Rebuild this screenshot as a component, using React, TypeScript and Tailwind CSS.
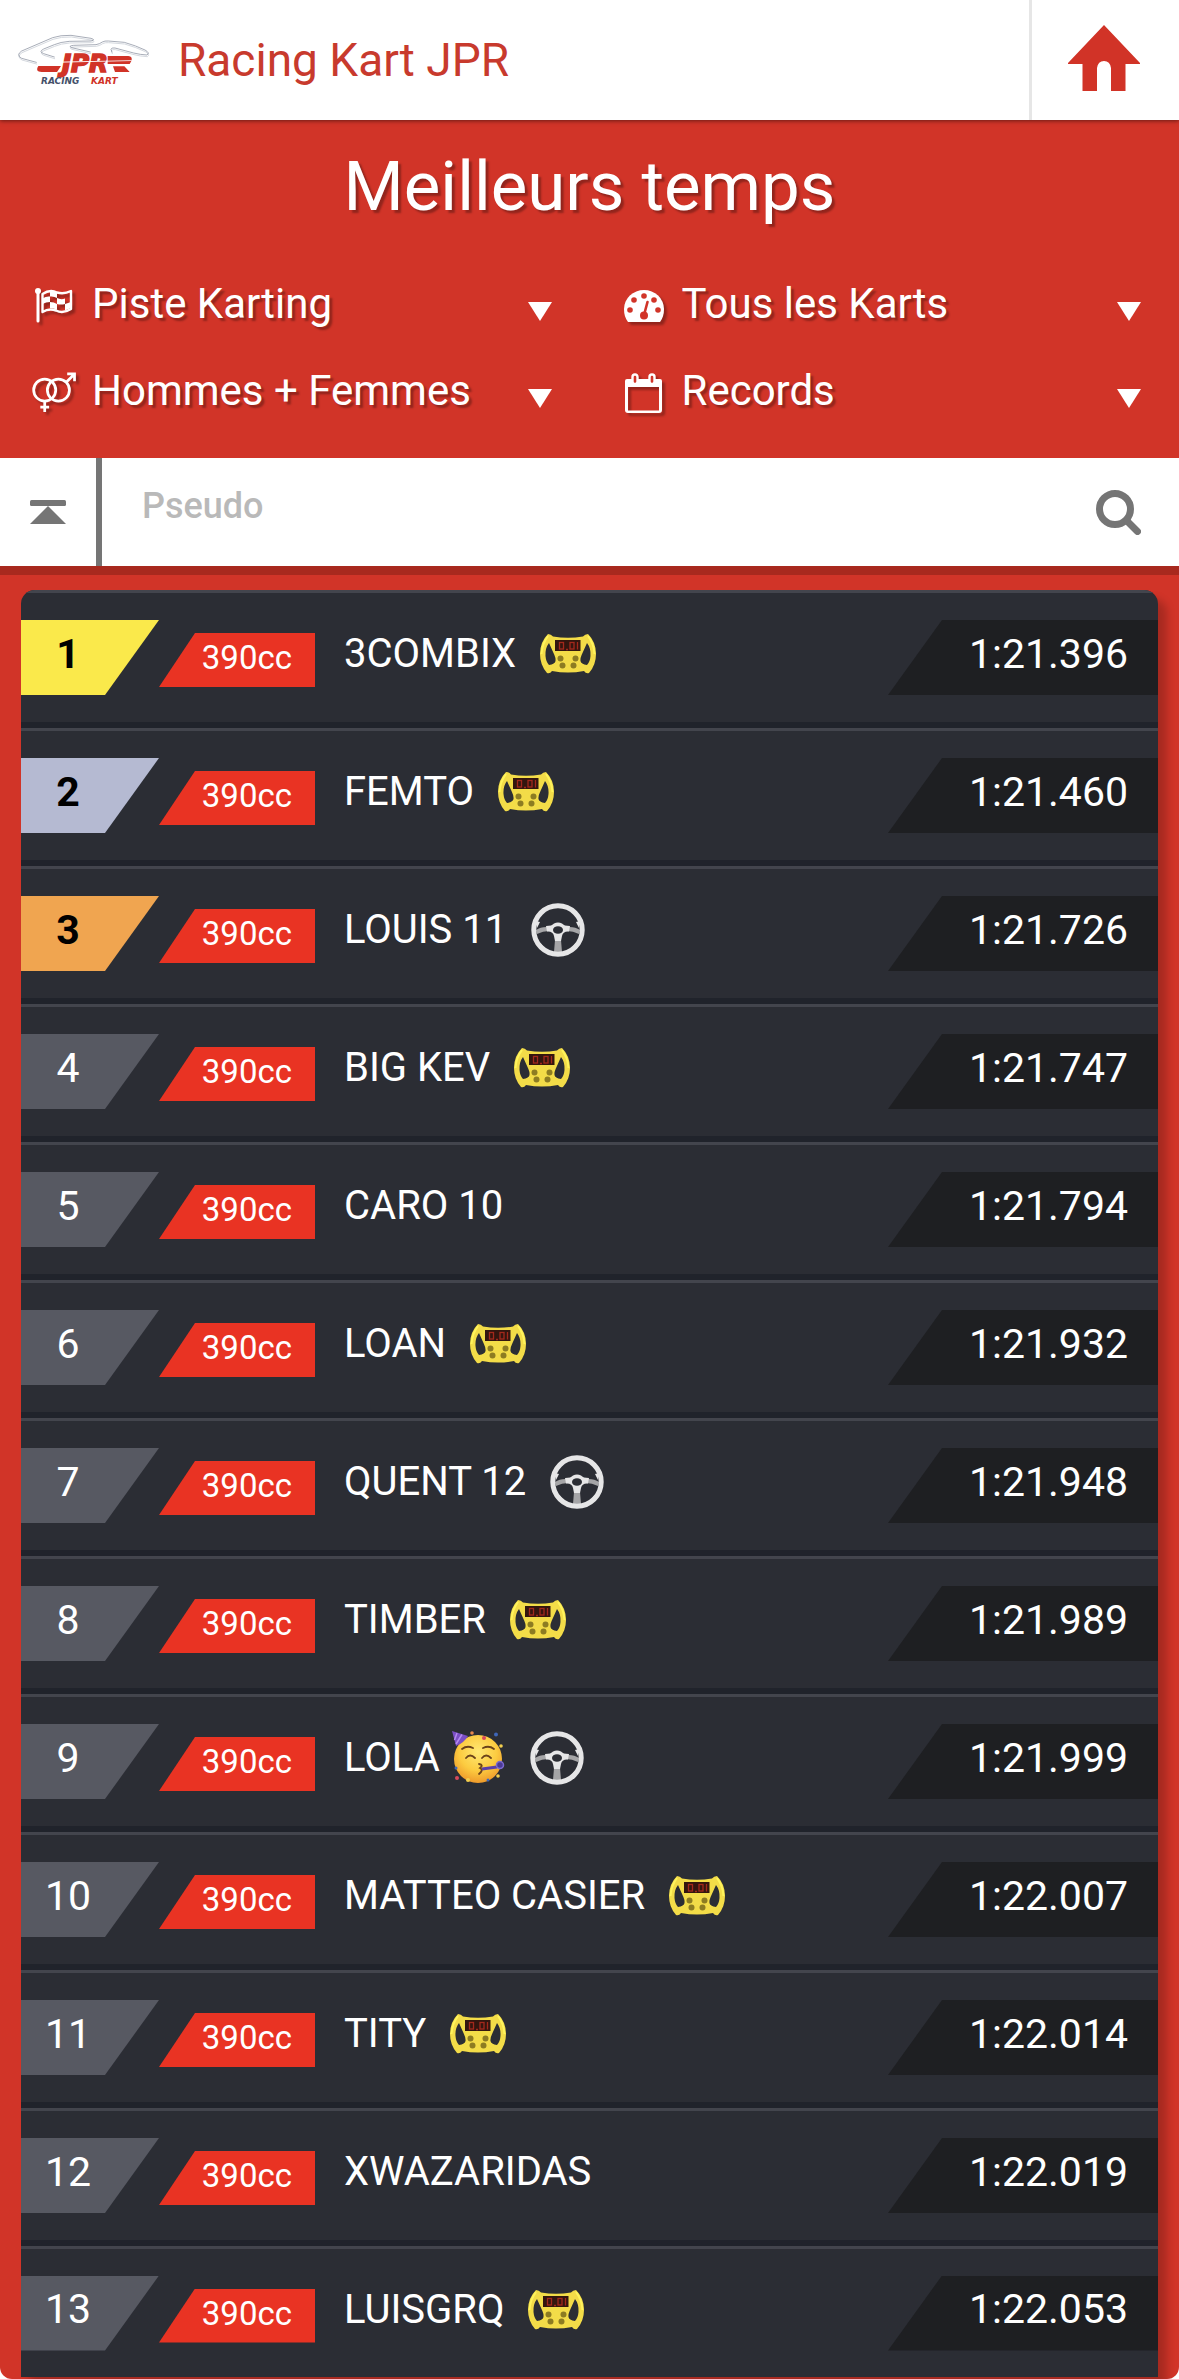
import React from "react";

interface Lap {
  rank: number;
  name: string;
  time: string;
  wheel?: "f1" | "classic";
  party?: boolean;
}

const laps: Lap[] = [
  { rank: 1, name: "3COMBIX", time: "1:21.396", wheel: "f1" },
  { rank: 2, name: "FEMTO", time: "1:21.460", wheel: "f1" },
  { rank: 3, name: "LOUIS 11", time: "1:21.726", wheel: "classic" },
  { rank: 4, name: "BIG KEV", time: "1:21.747", wheel: "f1" },
  { rank: 5, name: "CARO 10", time: "1:21.794" },
  { rank: 6, name: "LOAN", time: "1:21.932", wheel: "f1" },
  { rank: 7, name: "QUENT 12", time: "1:21.948", wheel: "classic" },
  { rank: 8, name: "TIMBER", time: "1:21.989", wheel: "f1" },
  { rank: 9, name: "LOLA", time: "1:21.999", wheel: "classic", party: true },
  { rank: 10, name: "MATTEO CASIER", time: "1:22.007", wheel: "f1" },
  { rank: 11, name: "TITY", time: "1:22.014", wheel: "f1" },
  { rank: 12, name: "XWAZARIDAS", time: "1:22.019" },
  { rank: 13, name: "LUISGRQ", time: "1:22.053", wheel: "f1" },
];

const rankColors: Record<number, string> = {
  1: "bg-[#fae94b] text-black font-bold",
  2: "bg-[#b5bad2] text-black font-bold",
  3: "bg-[#f0a550] text-black font-bold",
};

const trackLeft =
  "M76 110 L32 98 Q14 88 32 76 L125 36 Q148 28 180 29 L240 38 Q256 43 240 46 L175 47 Q148 49 130 57 L98 70 Q82 78 98 84 L130 94";
const trackRight =
  "M238 79 L182 66 Q170 61 188 59 L255 57 Q266 55 274 49 Q281 45 292 46 L340 50 Q375 60 402 73 Q418 82 408 88 Q388 87 368 82 L312 67 Q301 65 300 71 L303 79";

const Logo = () => (
  <svg viewBox="15 25 402 156" className="w-[134px] shrink-0" role="img" aria-label="JPR Racing Kart">
    <g fill="none" strokeLinecap="round" strokeLinejoin="round">
      <g stroke="#d5d9df" strokeWidth="3" transform="translate(1 5)">
        <path d={trackLeft} />
        <path d={trackRight} />
      </g>
      <g stroke="#7c8494" strokeWidth="2">
        <path d={trackLeft} />
        <path d={trackRight} />
      </g>
    </g>
    <path d="M82 121 H150 L138 139 H92 Q70 138 82 121 Z M290 91 H352 Q366 93 361 106 L356 115 H290 Z M306 122 H340 L356 139 H312 Z" fill="#d13327" />
    <text
      x="222"
      y="140"
      textAnchor="middle"
      fontSize="74"
      strokeWidth="5"
      className="fill-[#d13327] stroke-[#d13327] font-['DejaVu_Sans',sans-serif] font-bold italic"
    >
      JPR
    </text>
    <path d="M130 108 L362 104 V106 L130 111 Z" fill="#fff" />
    <text y="174" fontSize="27" className="font-['DejaVu_Sans',sans-serif] font-bold italic">
      <tspan x="90" className="fill-[#45516a]">RACING</tspan>
      <tspan x="240" className="fill-[#d13327]">KART</tspan>
    </text>
  </svg>
);

const FlagIcon = () => (
  <svg viewBox="0 0 38 35" className="w-[38px]" fill="none" stroke="white" aria-hidden="true">
    <circle cx="3" cy="3" r="3" fill="white" stroke="none" />
    <path d="M3 4 V33" strokeWidth="3" strokeLinecap="round" />
    <path d="M7.500 6 Q15 1 22 4.500 Q29 6.500 36 3 V21 Q28 26 21 22.500 Q14 20 7.500 24 Z" strokeWidth="2.400" strokeLinejoin="round" />
    <path d="M15 3.500 Q20 3 22 5 V10 Q19 8 15 8.500 Z M7.500 10.500 Q11 8 15 8.500 V14 Q11 14 7.500 16 Z M22 10 Q26 12 30 10.500 V16 Q26 17 22 16 Z M15 14 Q19 14 22 16 V22 Q19 20 15 20 Z M30 16 L36 14 V20 L30 22.500 Z" fill="white" stroke="none" />
  </svg>
);

const GenderIcon = () => (
  <svg viewBox="0 0 45 41" className="w-[45px]" fill="none" stroke="white" strokeWidth="2.800" aria-hidden="true">
    <circle cx="13" cy="18.500" r="11.300" />
    <circle cx="27" cy="18.500" r="11.300" />
    <path d="M13 30 V41 M8.500 36 H17.500 M35 10.500 L43 2.500 M36 2 H43.500 V9.500" />
  </svg>
);

const GaugeIcon = () => (
  <svg viewBox="0 0 40 32" className="w-10" aria-hidden="true">
    <path d="M4 32 Q0 27 0 19 A20 19 0 0 1 40 19 Q40 27 36 32 Z" fill="white" />
    <g fill="#d13428">
      <circle cx="6" cy="20" r="2.800" />
      <circle cx="10" cy="10" r="2.800" />
      <circle cx="20" cy="6" r="2.800" />
      <circle cx="30" cy="10" r="2.800" />
      <circle cx="34" cy="20" r="2.800" />
      <circle cx="20" cy="25.500" r="4" />
    </g>
    <path d="M20 25 L23.500 12" stroke="#d13428" strokeWidth="2.600" strokeLinecap="round" />
  </svg>
);

const CalendarIcon = () => (
  <svg viewBox="0 0 37 40" className="w-[37px]" aria-hidden="true">
    <path d="M2 6 H35 Q37 6 37 8 V37 Q37 40 34 40 H3 Q0 40 0 37 V8 Q0 6 2 6 Z M3 14 V37.500 H34 V14 Z" fill="white" fillRule="evenodd" />
    <g fill="#d13428" stroke="white" strokeWidth="2.400">
      <rect x="7.500" y="1.500" width="5" height="9.500" rx="2.400" />
      <rect x="24.500" y="1.500" width="5" height="9.500" rx="2.400" />
    </g>
  </svg>
);

const F1Wheel = () => (
  <svg viewBox="0 0 56 40" className="w-14 shrink-0" role="img" aria-label="Pilote pro">
    <path
      d="M8 0 Q11 0 13 2.500 Q28 5 43 2.500 Q45 0 48 0 Q56 8 56 20 Q56 31 49 39 Q46 40 44 37 Q28 40 12 37 Q10 40 7 39 Q0 31 0 20 Q0 8 8 0 Z M9 9 Q5 14 5.500 22 Q6 28 9 31 Q15 30 15.500 27 Q16 24 13.500 19 Z M47 9 L42.500 19 Q40 24 40.500 27 Q41 30 47 31 Q50 28 50.500 22 Q51 14 47 9 Z"
      fill="#f3dc48"
      fillRule="evenodd"
    />
    <path d="M1.500 20 Q2 10 8 2 M54.500 20 Q54 10 48 2" stroke="#fff45c" strokeWidth="2" fill="none" />
    <rect x="15" y="6" width="25.500" height="11" fill="#33160f" />
    <g stroke="#a3281c" strokeWidth="1.300" fill="none">
      <rect x="19.500" y="8.500" width="4" height="6.500" />
      <rect x="30" y="8.500" width="4" height="6.500" />
      <path d="M26 15.500 H28 M37.500 8 V15.500" />
    </g>
    <g fill="#8d7c22">
      <circle cx="20.500" cy="24.500" r="3" />
      <circle cx="35.500" cy="24.500" r="3" />
      <circle cx="22.500" cy="31.500" r="3" />
      <circle cx="33.500" cy="31.500" r="3" />
    </g>
  </svg>
);

const ClassicWheel = () => (
  <svg viewBox="0 0 54 54" className="w-[54px] shrink-0" role="img" aria-label="Pilote confirmé">
    <path d="M5 27 Q10 23.500 17 24 L18 28 Q12 28 6 31 Z M49 27 Q44 23.500 37 24 L36 28 Q42 28 48 31 Z M24 37 H30 L31 49 H23 Z" fill="#a5a5a7" />
    <path d="M15 23 Q21 23 23 20.500 Q27 18.500 31 20.500 Q33 23 39 23 L38 28.500 Q32 28 31 33 L30 38 H24 L23 33 Q22 28 16 28.500 Z" fill="#e6e6e7" />
    <ellipse cx="27" cy="27" rx="5" ry="3.800" fill="#2b2d34" />
    <circle cx="27" cy="27" r="24.200" fill="none" stroke="#e6e6e7" strokeWidth="5" />
    <path d="M5 18 L9 19 L6 25 Z M49 18 L45 19 L48 25 Z M5 36 L12 43 L8 44 Z M49 36 L42 43 L46 44 Z" fill="#e6e6e7" />
  </svg>
);

const PartyFace = () => (
  <svg viewBox="0 0 54 54" className="w-[54px] shrink-0" role="img" aria-label="Visage de fête">
    <defs>
      <radialGradient id="face" cx="0.5" cy="0.35" r="0.65">
        <stop offset="0" stopColor="#ffe873" />
        <stop offset="0.6" stopColor="#fccb40" />
        <stop offset="1" stopColor="#ee9a2b" />
      </radialGradient>
    </defs>
    <circle cx="26" cy="28" r="24" fill="url(#face)" />
    <path d="M0 0 L16 5 Q12 12 4 15 Z" fill="#7b4fc4" />
    <path d="M5 2 L2.500 9 M10 3.500 L4 13" stroke="#b58af0" strokeWidth="1.500" />
    <path d="M10 18 Q15 14 21 17 M31 17 Q37 14 42 18 M14 27 Q18 22 23 27 M30 27 Q34 22 39 27 M27 33 Q32 34 28 37 Q32 39 27 43" stroke="#6b431a" strokeWidth="1.800" fill="none" strokeLinecap="round" />
    <path d="M30 38 L45 36" stroke="#5b3fa8" strokeWidth="3" />
    <circle cx="48" cy="34" r="3.500" fill="#4b3a96" stroke="#7c6ad0" strokeWidth="1.500" />
    <g fill="#d7485a">
      <circle cx="32" cy="7" r="2" />
      <circle cx="5" cy="47" r="2" />
    </g>
    <g fill="#3f66b8">
      <circle cx="44" cy="3.500" r="2" />
      <circle cx="4" cy="37" r="1.500" />
      <circle cx="36" cy="49" r="1.500" />
    </g>
    <g fill="#f3cf4f">
      <circle cx="49" cy="15" r="1.800" />
      <circle cx="16" cy="49" r="2" />
      <circle cx="46" cy="45" r="1.800" />
      <circle cx="20" cy="2" r="1.800" fill="#e8894a" />
    </g>
  </svg>
);

interface FilterProps {
  id: string;
  label: string;
  value: string;
  icon: React.ReactNode;
}

const Filter = ({ id, label, value, icon }: FilterProps) => (
  <div className="relative flex h-[87px] items-center pl-8">
    <label htmlFor={id} className="mt-1 flex w-11 justify-center drop-shadow-[3px_3px_1px_rgba(0,0,0,0.3)]">
      {icon}
    </label>
    <select
      id={id}
      aria-label={label}
      className="ml-4 min-w-0 flex-1 appearance-none bg-transparent text-[42px] leading-[60px] text-white outline-none [text-shadow:3px_3px_2px_rgba(0,0,0,0.3)]"
    >
      <option>{value}</option>
    </select>
    <svg viewBox="0 0 24 19" className="pointer-events-none absolute right-[38px] top-[42px] w-6" aria-hidden="true">
      <path d="M0 0 H24 L12 19 Z" fill="white" />
    </svg>
  </div>
);

const App: React.FC = () => {
  return (
    <div className="bg-white font-[Roboto,'Liberation_Sans',sans-serif]">
      <header className="relative z-10 flex h-30 items-stretch bg-white shadow-[0_1px_4px_rgba(0,0,0,0.5)]">
        <div className="flex flex-1 items-center gap-7 pl-4">
          <Logo />
          <span className="text-[46px] text-[#c83a2d]">Racing Kart JPR</span>
        </div>
        <a href="#" aria-label="Accueil" className="flex w-[150px] justify-center border-l-3 border-[#e6e6e6] pt-[25px] pr-1">
          <svg viewBox="0 0 72 66" className="h-[66px] w-[72px]" aria-hidden="true">
            <path d="M36 0 L72 38 V39 H57.500 V66 H43 V43 Q42 36 36 36 Q30 36 29 43 V66 H14.500 V39 H0 V38 Z" fill="#d13327" />
          </svg>
        </a>
      </header>

      <main className="rounded-b-xl bg-[#d13428] pb-[2px]">
        <h1 className="pt-[22px] text-center text-[69px] leading-[90px] text-white [text-shadow:3px_3px_2px_rgba(0,0,0,0.3)]">
          Meilleurs temps
        </h1>
        <div className="grid grid-cols-2 pt-7 pb-6">
          <Filter id="track" label="Piste" value="Piste Karting" icon={<FlagIcon />} />
          <Filter id="kart" label="Kart" value="Tous les Karts" icon={<GaugeIcon />} />
          <Filter id="gender" label="Catégorie" value="Hommes + Femmes" icon={<GenderIcon />} />
          <Filter id="period" label="Période" value="Records" icon={<CalendarIcon />} />
        </div>

        <form className="flex h-[117px] border-b-9 border-[#a8291e] bg-white" onSubmit={(e) => e.preventDefault()}>
          <button type="button" aria-label="Haut de page" className="flex w-[102px] items-center justify-center border-r-6 border-[#757575]">
            <svg viewBox="0 0 36 24" className="w-9" fill="#757575" aria-hidden="true">
              <rect width="36" height="6" rx="1.500" />
              <path d="M18 6 L36 24 H0 Z" />
            </svg>
          </button>
          <input
            type="text"
            aria-label="Pseudo"
            placeholder="Pseudo"
            className="min-w-0 flex-1 pb-3 pl-10 text-[36px] font-medium outline-none placeholder:text-[#b9b9b9]"
          />
          <button type="submit" aria-label="Rechercher" className="px-[38px]">
            <svg viewBox="0 0 45 45" className="w-[45px]" fill="none" stroke="#757575" aria-hidden="true">
              <circle cx="19" cy="19" r="15.500" strokeWidth="7" />
              <path d="M31 31 L41.500 41.500" strokeWidth="7" strokeLinecap="round" />
            </svg>
          </button>
        </form>

        <div className="px-[21px] pt-[15px]">
          <div className="rounded-t-[14px] shadow-[9px_9px_9px_rgba(0,0,0,0.2)]">
            <div className="overflow-hidden rounded-t-[14px] bg-[#2b2d34]">
              <table className="w-full border-separate border-spacing-0 text-[41px] text-white">
                <tbody>
                  {laps.map((lap) => (
                    <tr
                      key={lap.rank}
                      className="h-[138px] last:h-[131px] *:border-t-3 *:border-b-6 *:border-t-[#43454d] *:border-b-[#20232b] last:*:border-b-0"
                    >
                      <td className="w-[138px] p-0">
                        <div
                          className={`flex h-[75px] items-center justify-center pr-11 pb-1.5 [clip-path:polygon(0_0,100%_0,84px_100%,0_100%)] ${
                            rankColors[lap.rank] || "bg-[#575962]"
                          }`}
                        >
                          {lap.rank}
                        </div>
                      </td>
                      <td className="w-[156px] p-0 pt-[5px]">
                        <div className="flex h-[54px] items-center justify-end bg-[#e93323] pr-[23px] pb-1 text-[33px] [clip-path:polygon(36px_0,100%_0,100%_100%,0_100%)]">
                          390cc
                        </div>
                      </td>
                      <td className="p-0 pb-[7px] pl-[29px] text-[40px]">
                        <div className="flex items-center gap-6 whitespace-nowrap">
                          <span className="flex items-center gap-3">
                            {lap.name}
                            {lap.party && <PartyFace />}
                          </span>
                          {lap.wheel === "f1" && <F1Wheel />}
                          {lap.wheel === "classic" && <ClassicWheel />}
                        </div>
                      </td>
                      <td className="w-[270px] p-0">
                        <div className="flex h-[75px] items-center justify-end bg-[#1e1f22] pr-[30px] pb-1.5 [clip-path:polygon(54px_0,100%_0,100%_100%,0_100%)]">
                          {lap.time}
                        </div>
                      </td>
                    </tr>
                  ))}
                </tbody>
              </table>
            </div>
          </div>
        </div>
      </main>
    </div>
  );
};

export default App;
